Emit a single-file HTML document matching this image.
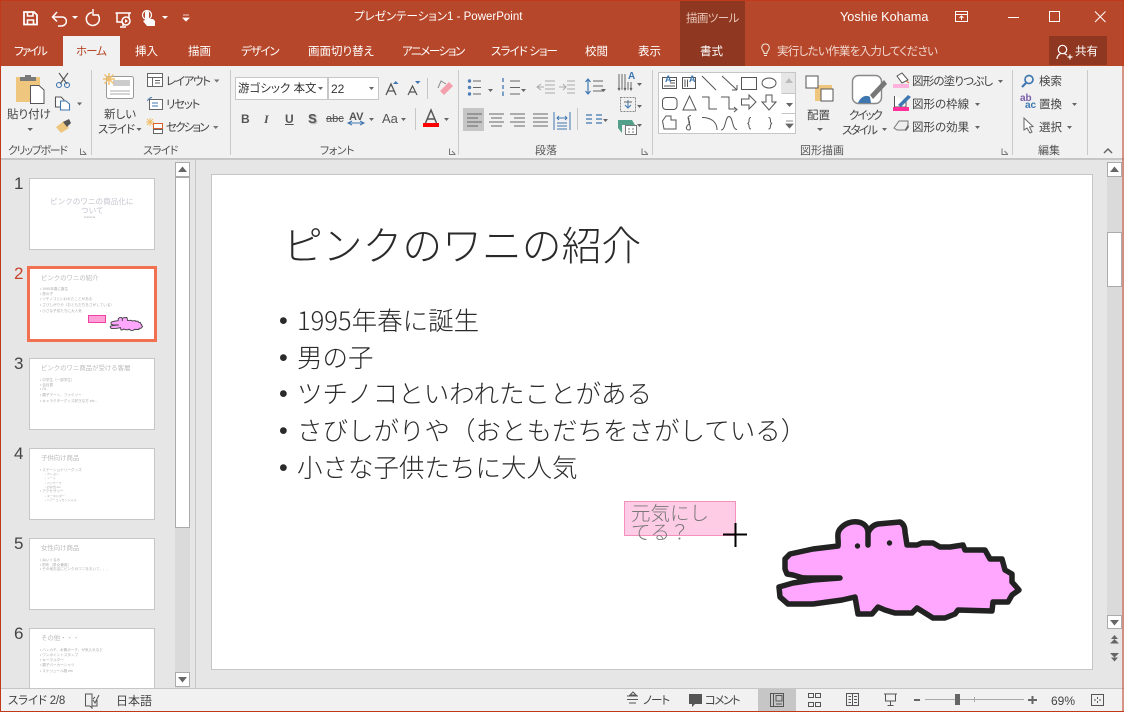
<!DOCTYPE html>
<html lang="ja"><head><meta charset="utf-8"><title>PowerPoint</title>
<style>
html,body{margin:0;padding:0;width:1124px;height:712px;overflow:hidden;background:#E6E6E6}
body{position:relative;font-family:"Liberation Sans","Noto Sans CJK JP",sans-serif;font-feature-settings:"palt";color:#444}
.b{position:absolute}
.t{position:absolute;white-space:nowrap;font-size:11.5px;line-height:16px;color:#444}
.w{color:#fff}
.g{color:#555}
.th{position:absolute;background:#fff;border:1px solid #c6c6c6;box-sizing:border-box}
.n{position:absolute;left:14px;font-size:17px;line-height:20px;color:#444;font-feature-settings:normal}
.x{position:absolute;white-space:nowrap;color:#aaa;line-height:6px;font-size:3.6px;font-feature-settings:normal}
.h{position:absolute;white-space:nowrap;color:#bbb;line-height:8px;font-size:6.4px;font-feature-settings:normal}
.s{position:absolute;white-space:nowrap;font-family:"Noto Sans CJK JP",sans-serif;font-size:25.5px;line-height:36px;left:297px;color:#2a2a2a;font-weight:300;font-feature-settings:normal}
svg{position:absolute;left:0;top:0}
</style></head><body>
<!-- chrome backgrounds -->
<div class="b" style="left:0;top:0;width:1124px;height:66px;background:#B7472A"></div>
<div class="b" style="left:680px;top:1px;width:65px;height:65px;background:#8F3720"></div>
<div class="b" style="left:63px;top:36px;width:57px;height:30px;background:#F1F1F1"></div>
<div class="b" style="left:1049px;top:36px;width:58px;height:29px;background:#8F3720"></div>
<div class="b" style="left:0;top:66px;width:1124px;height:92px;background:#F1F1F1"></div>
<div class="b" style="left:0;top:158px;width:1124px;height:2px;background:#C6C6C6"></div>
<div class="b" style="left:195px;top:160px;width:1px;height:528px;background:#C6C6C6"></div>
<div class="b" style="left:0;top:688px;width:1124px;height:1px;background:#C6C6C6"></div>
<div class="b" style="left:0;top:689px;width:1124px;height:22px;background:#F1F1F1"></div>
<div class="b" style="left:758px;top:689px;width:38px;height:22px;background:#C6C6C6"></div>
<!-- ribbon selected + boxes -->
<div class="b" style="left:463px;top:108px;width:21px;height:23px;background:#C6C6C6"></div>
<div class="b" style="left:235px;top:77px;width:93px;height:23px;background:#fff;border:1px solid #c6c6c6;box-sizing:border-box"></div>
<div class="b" style="left:328px;top:77px;width:51px;height:23px;background:#fff;border:1px solid #c6c6c6;box-sizing:border-box"></div>
<div class="b" style="left:658px;top:72px;width:138px;height:62px;background:#fff;border:1px solid #c6c6c6;box-sizing:border-box"></div>
<div class="b" style="left:781px;top:73px;width:14px;height:20px;background:#E6E6E6"></div>
<!-- scrollbars -->
<div class="b" style="left:175px;top:162px;width:15px;height:526px;background:#DADADA"></div>
<div class="b" style="left:175px;top:162px;width:15px;height:15px;background:#fff;border:1px solid #ababab;box-sizing:border-box"></div>
<div class="b" style="left:175px;top:177px;width:15px;height:351px;background:#fff;border:1px solid #ababab;box-sizing:border-box"></div>
<div class="b" style="left:175px;top:672px;width:15px;height:15px;background:#fff;border:1px solid #ababab;box-sizing:border-box"></div>
<div class="b" style="left:1107px;top:162px;width:15px;height:466px;background:#DADADA"></div>
<div class="b" style="left:1107px;top:162px;width:15px;height:15px;background:#fff;border:1px solid #ababab;box-sizing:border-box"></div>
<div class="b" style="left:1107px;top:232px;width:15px;height:55px;background:#fff;border:1px solid #ababab;box-sizing:border-box"></div>
<div class="b" style="left:1107px;top:615px;width:15px;height:14px;background:#fff;border:1px solid #ababab;box-sizing:border-box"></div>
<!-- main slide -->
<div class="b" style="left:211px;top:174px;width:882px;height:496px;background:#fff;border:1px solid #c6c6c6;box-sizing:border-box"></div>
<!-- thumbnails -->
<div class="th" style="left:29px;top:178px;width:126px;height:72px"></div>
<div class="th" style="left:27px;top:266px;width:130px;height:76px;border:3px solid #F0704F"></div>
<div class="th" style="left:29px;top:358px;width:126px;height:72px"></div>
<div class="th" style="left:29px;top:448px;width:126px;height:72px"></div>
<div class="th" style="left:29px;top:538px;width:126px;height:72px"></div>
<div class="th" style="left:29px;top:628px;width:126px;height:60px;border-bottom:0"></div>
<div class="n" style="top:174px">1</div><div class="n" style="top:264px;color:#C8452A">2</div><div class="n" style="top:354px">3</div><div class="n" style="top:444px">4</div><div class="n" style="top:534px">5</div><div class="n" style="top:624px">6</div>
<div class="h" style="left:50px;top:198px;font-size:7.6px;color:#c4c4cf">ピンクのワニの商品化に</div>
<div class="h" style="left:81px;top:207px;font-size:7.6px;color:#c4c4cf">ついて</div>
<div class="x" style="left:84px;top:214px;font-size:3px">Kohama</div>
<div class="h" style="left:41px;top:275px">ピンクのワニの紹介</div>
<div class="x" style="left:40px;top:286px">• 1995年春に誕生</div><div class="x" style="left:40px;top:291px">• 男の子</div><div class="x" style="left:40px;top:296px">• ツチノコといわれたことがある</div><div class="x" style="left:40px;top:302px">• さびしがりや（おともだちをさがしている）</div><div class="x" style="left:40px;top:308px">• 小さな子供たちに大人気</div>
<div class="h" style="left:41px;top:365px">ピンクのワニ商品が受ける客層</div>
<div class="x" style="left:40px;top:377px">• 中学生（一部学生）</div><div class="x" style="left:40px;top:382px">• 会社員</div><div class="x" style="left:40px;top:386px">• OL</div><div class="x" style="left:40px;top:392px">• 親子デート、ファミリー</div><div class="x" style="left:40px;top:398px">• キャラクターグッズ好きな方 etc…</div>
<div class="h" style="left:41px;top:455px">子供向け商品</div>
<div class="x" style="left:40px;top:467px">• ステーショナリーグッズ</div><div class="x" style="left:45px;top:471px;font-size:3px">› クレヨン</div><div class="x" style="left:45px;top:475px;font-size:3px">› ノート</div><div class="x" style="left:45px;top:480px;font-size:3px">› ペンケース</div><div class="x" style="left:45px;top:484px;font-size:3px">› お弁当 etc</div><div class="x" style="left:40px;top:488px">• アクセサリー</div><div class="x" style="left:45px;top:493px;font-size:3px">› キーホルダー</div><div class="x" style="left:45px;top:497px;font-size:3px">› ヘアーエッセンシャル</div>
<div class="h" style="left:41px;top:545px">女性向け商品</div>
<div class="x" style="left:40px;top:557px">• ぬいぐるみ</div><div class="x" style="left:40px;top:562px">• 財布（男女兼用）</div><div class="x" style="left:40px;top:566px">• その他お店にピンクのワニをおいて、、、</div>
<div class="h" style="left:41px;top:635px">その他・・・</div>
<div class="x" style="left:40px;top:647px">• ハンカチ、水筒ポーチ、が気入れなど</div><div class="x" style="left:40px;top:652px">• ワンポイントスタンプ</div><div class="x" style="left:40px;top:657px">• キーホルダー</div><div class="x" style="left:40px;top:662px">• 親子パーカーシャツ</div><div class="x" style="left:40px;top:668px">• スケジュール帳 etc</div>
<div class="b" style="left:88px;top:315px;width:18px;height:8px;background:#FF9FD8;border:1px solid #F040A0;box-sizing:border-box"></div>

<!-- slide content -->
<div class="t" style="left:283px;top:220px;font-family:'Noto Sans CJK JP',sans-serif;font-size:39.8px;line-height:48px;color:#2a2a2a;font-weight:300;font-feature-settings:normal">ピンクのワニの紹介</div>
<div class="t" style="left:279px;top:303px;font-size:25px;line-height:36px;color:#2a2a2a">•</div>
<div class="t" style="left:279px;top:340px;font-size:25px;line-height:36px;color:#2a2a2a">•</div>
<div class="t" style="left:279px;top:376px;font-size:25px;line-height:36px;color:#2a2a2a">•</div>
<div class="t" style="left:279px;top:413px;font-size:25px;line-height:36px;color:#2a2a2a">•</div>
<div class="t" style="left:279px;top:450px;font-size:25px;line-height:36px;color:#2a2a2a">•</div>
<div class="s" style="top:302px">1995年春に誕生</div>
<div class="s" style="top:339px">男の子</div>
<div class="s" style="top:375px">ツチノコといわれたことがある</div>
<div class="s" style="top:412px">さびしがりや（おともだちをさがしている）</div>
<div class="s" style="top:449px">小さな子供たちに大人気</div>
<div class="b" style="left:624px;top:501px;width:112px;height:35px;background:#FFCCE6;border:1px solid #F490BC;box-sizing:border-box"></div>
<div class="t" style="left:631px;top:502px;font-family:'Noto Sans CJK JP',sans-serif;font-size:19.5px;line-height:19px;color:#777;font-weight:300;font-feature-settings:normal;white-space:normal;width:85px">元気にし<br>てる？</div>

<!-- icons and shapes -->
<svg width="1124" height="712" viewBox="0 0 1124 712" fill="none">
<defs>
<path id="croc" d="M785 569L785 559L790 554L813 549L838 546C839 540 836 534 840 529C845 523 852 521 858 522C864 523 868 527 868 533L868 545L868 533C870 528 873 525 878 524L900 522C904 524 905 528 905 532L907 545L917 545L922 543L933 543L940 547L950 547L963 545L965 550L985 550L990 559L1002 559L1005 570L1012 574L1012 582L1019 590L1012 595L1008 602L993 602L992 611L958 610L955 614L945 618L933 618L917 608L912 613L895 613L885 610L878 607L872 614L858 614L855 597L842 600L813 604L788 604L780 597L779 587L793 583L813 580L840 578L803 578L793 575L787 574Z"/>
</defs>
<!-- window edges -->
<path d="M.5 0V712M1123 0V712M0 711.5H1124" stroke="#C0391B"/>
<path d="M0 .5H1124" stroke="#C0391B"/>
<!-- croc main -->
<use href="#croc" fill="#FFA6FF" stroke="#222" stroke-width="5.500" stroke-linejoin="round"/>
<path d="M840 578L803 576L793 583Z" fill="#222" stroke="#222" stroke-width="1.500"/>
<circle cx="857.500" cy="546" r="2.700" fill="#222"/>
<circle cx="889.500" cy="543" r="2.700" fill="#222"/>
<!-- croc thumb -->
<g transform="translate(5.100 247) scale(.135)"><use href="#croc" fill="#FFA6FF" stroke="#444" stroke-width="7" stroke-linejoin="round"/></g>
<!-- cursor -->
<path d="M723 534.500H747M735.500 523V547" stroke="#000" stroke-width="2"/>
<!-- QAT -->
<g stroke="#fff" stroke-width="1.500" fill="none">
<path d="M24 12H34L37 15V24.500H24Z" stroke-width="1.800"/><path d="M27.500 12V16H33V12M27.500 24.500V20H33.500V24.500" stroke-width="1.600"/>
<path d="M53 17H62C68 17 68 26 61 26H58"/><path d="M57 12L52.500 17L57 21.500"/>
<path d="M92 12.500A6.500 6.500 0 1 0 98 15"/><path d="M93 9V15H99" stroke-width="1.400"/>
<path d="M115.500 13H131M117 13V22H129V13M123 22V26M120 27H126"/><circle cx="126" cy="21" r="4" fill="#B7472A"/><path d="M125 19L128 21L125 23Z" fill="#fff" stroke="none"/>
<circle cx="147" cy="15" r="4.500" stroke-width="1.200"/>
<path d="M145 13A2 2 0 0 1 149 13V19H153L155 21V26H147L143 21L145 20Z" fill="#fff" stroke="none"/>
</g>
<path d="M72 16H78L75 19ZM162 16H168L165 19Z" fill="#fff"/>
<path d="M183 15H189M183 18H189L186 21Z" stroke="#fff" fill="#fff" stroke-width=".8"/>
<!-- window controls -->
<g stroke="#fff" fill="none">
<rect x="955.500" y="11.500" width="12" height="10"/><path d="M955.500 14.500H967.500M961.500 20V16M959.500 18L961.500 16L963.500 18"/>
<path d="M1008 17.500H1019"/><rect x="1049.500" y="11.500" width="10" height="10"/>
<path d="M1095 11.500L1105.500 22M1105.500 11.500L1095 22"/>
<circle cx="1062.500" cy="49.500" r="4.200" stroke-width="1.200"/>
<path d="M1057 59C1057 56 1059 54.500 1060.500 53.500M1064.500 53.500L1067 55M1067.500 57H1072.500M1070 54.500V59.500" stroke-width="1.200"/>
<path d="M764 53.500V52C760 48 762 44 765.500 44C769 44 771 48 767 52V53.500ZM764 55.500H767" stroke="#eed"/>
</g>
<!-- clipboard -->
<path d="M16 77H40V102H16Z" fill="#EFC67E"/><path d="M20 81V77H25V75H31V77H36V81Z" fill="#7a7a7a"/>
<path d="M30.500 85.500H39L44 90V103.500H30.500Z" fill="#fff" stroke="#555"/>
<g stroke="#555" fill="none" stroke-width="1.100"><path d="M59 73L67 84M68 73L60 84"/><circle cx="59" cy="85" r="2.500" stroke="#3F77B0"/><circle cx="67" cy="85" r="2.500" stroke="#3F77B0"/>
<path d="M55.500 97H61L64 100V107H55.500Z" fill="#fff"/><path d="M60.500 101H66L69.500 104V110H60.500Z" fill="#fff" stroke="#3F77B0"/>
</g>
<path d="M77 102.500H82L79.500 105.500Z" fill="#666"/>
<path d="M56 127L64 121L69 128L61 133Z" fill="#EFC67E"/><path d="M63 122L69 119L71 123L67 127Z" fill="#555"/>
<path d="M27.500 128H33L30 131Z" fill="#666"/>
<!-- new slide -->
<g stroke="#999" fill="#fff"><rect x="106.500" y="76.500" width="27" height="22" rx="2"/></g>
<rect x="113" y="80" width="17" height="6" fill="#ccc"/><path d="M110 91H130M110 94H130" stroke="#aaa"/>
<path d="M109 73V85M103 79H115M104.500 74.500L113.500 83.500M113.500 74.500L104.500 83.500" stroke="#EFBE6B" stroke-width="1.400"/>
<path d="M136.500 128H141.500L139 131Z" fill="#666"/>
<g stroke="#666" fill="#fff"><rect x="147.500" y="73.500" width="15" height="13"/><path d="M147.500 77.500H162.500M152.500 77.500V86.500M155 80.500H160M155 83H160" fill="none"/>
<rect x="149.500" y="99.500" width="13" height="10" stroke="#666"/><path d="M152 97.500C150 97.500 148 99 147.500 101M152 103H158M152 106H158" fill="none" stroke="#3F77B0"/>
<rect x="153.500" y="123.500" width="9" height="5" stroke="#D9602C"/><rect x="153.500" y="129.500" width="9" height="4"/></g>
<path d="M150 118V126M146 122H154M147 119L153 125M153 119L147 125" stroke="#EFBE6B"/>
<path d="M214 79.500H219.500L216.750 82.500ZM213 126H218.500L215.750 129Z" fill="#777"/>
<path d="M318 87H323L320.500 90ZM369 87H374L371.500 90Z" fill="#666"/>
<!-- font buttons -->
<path d="M386 95L391 84L396 95M388 91H394" stroke="#555" stroke-width="1.300"/><path d="M393 84H398.500L395.750 81Z" fill="#3F77B0"/>
<path d="M408 95L412.500 86L417 95M409.500 92H415.500" stroke="#555" stroke-width="1.200"/><path d="M415 81H420.500L417.750 84Z" fill="#3F77B0"/>
<path d="M427.500 78V99" stroke="#c6c6c6"/>
<path d="M440 91L449 82L453 86L444 95Z" fill="#F3A0AC"/><path d="M438 88L441 81L446 84" stroke="#888" stroke-width="1"/>
<path d="M415.500 108V130" stroke="#c6c6c6"/>
<path d="M369 118H374L371.500 121ZM401 118H406L403.500 121ZM444 118H449L446.500 121Z" fill="#666"/>
<path d="M425.500 123L431 110L436.500 123M427.500 119H434.500" stroke="#555" stroke-width="1.500"/><rect x="423" y="123" width="16" height="4" fill="#F00"/>
<path d="M349 123H363M352 121L348 123L352 125M360 121L364 123L360 125" stroke="#3F77B0" stroke-width="1"/>
<!-- paragraph -->
<g fill="#4D7EB5"><circle cx="469.500" cy="81" r="1.700"/><circle cx="469.500" cy="87.500" r="1.700"/><circle cx="469.500" cy="94" r="1.700"/></g>
<path d="M473 81H481M473 87.500H481M473 94H481M510 81H520M510 87.500H520M510 94H520" stroke="#666"/>
<path d="M488 89H493L490.500 92ZM521 89H526L523.500 92ZM601 89H606L603.500 92ZM637 83H642L639.500 86ZM637 105H642L639.500 108ZM603 119H608L605.500 122ZM637 124H642L639.500 127Z" fill="#666"/>
<path d="M503 78V82M503 85V89M503 91.500V96" stroke="#4D7EB5" stroke-width="1.400"/>
<path d="M545 81H555M545 85H555M545 89H555M545 93H555M567 81H575M567 85H575M567 89H575M567 93H575" stroke="#aaa"/>
<path d="M537 87H544M541 84L537 87L541 90M559 87H566M563 84L566 87L563 90" stroke="#aaa"/>
<path d="M588 79V94M585.500 82L588 79L590.500 82M585.500 91L588 94L590.500 91" stroke="#3F77B0" stroke-width="1.200"/><path d="M593 81H603M593 86H603M593 91H603" stroke="#666"/>
<path d="M619 74V90M622 74V90M625 74V90M628 82V90M631 82V90" stroke="#666"/><path d="M618 88L619 90L620 88M624 88L625 90L626 88M630 88L631 90L632 88" stroke="#666"/>
<rect x="620.500" y="97.500" width="15" height="14" stroke="#888" stroke-dasharray="2 1"/><path d="M628 100V108M625 105L628 108L631 105" stroke="#3F77B0"/><path d="M624 102H632" stroke="#666"/>
<path d="M467 114H482M467 118H478M467 122H482M467 126H478" stroke="#666"/>
<path d="M489 114H504M491 118H502M489 122H504M491 126H502M510 114H525M514 118H525M510 122H525M514 126H525M533 114H548M533 118H548M533 122H548M533 126H548" stroke="#666"/>
<path d="M554 112V130M570 112V130M557 118H567M559 116L557 118L559 120M565 116L567 118L565 120M557 123H567M557 126H567M557 129H567" stroke="#3F77B0"/>
<path d="M577.500 108V130" stroke="#c6c6c6"/>
<path d="M586 115H592M586 119H592M586 123H592M596 115H602M596 119H602M596 123H602" stroke="#3F77B0" stroke-width="1.300"/>
<path d="M618 120H632L635 125H622L622 133L618 128Z" fill="#53A08A"/><rect x="625.500" y="125.500" width="11" height="9" fill="#fff" stroke="#777"/><path d="M628 129H630M628 132H630M632 129H634M632 132H634" stroke="#777"/>
<!-- shapes gallery -->
<g stroke="#555" fill="none">
<rect x="662.500" y="77.500" width="14" height="11"/><rect x="682.500" y="77.500" width="13" height="11"/>
<path d="M664 86H675M670 80.500H675M670 83H675M685 79.500V87M687.500 79.500V87"/>
<path d="M702 76L716 90M722 76L737 90M737 90V85M737 90H732"/>
<rect x="741.500" y="77.500" width="15" height="12"/><ellipse cx="769" cy="83" rx="7" ry="5"/>
<rect x="662.500" y="97.500" width="14.500" height="12" rx="3.500"/><path d="M683 110L689.500 96L696 110Z"/>
<path d="M702 97H709V109H717M721 97H729V109H736M734 107L737 109.500L734 112"/>
<path d="M741.500 99H749V95L756 102L749 109V105H741.500Z"/><path d="M766 95H772V102H776L769 110L762 102H766Z"/>
<path d="M662.500 121L666 116H671V120H676V129H664Z"/>
<path d="M691 115.500C684 117 692 122 689 124C685 127 686 130 689 130C693 129 687 122 689 118"/>
<path d="M702 117.500C710 117.500 717 121 717 130M721 130C726 130 725 116.500 729 116.500C733 116.500 732 129.500 737 129.500"/>
<path d="M751 117.500C747.500 117.500 750.500 123 747.500 123.500C750.500 124 747.500 129 751 129M768.500 117.500C772 117.500 769 123 772 123.500C769 124 772 129 768.500 129"/>
</g>
<path d="M785 83H793L789 78Z" fill="#bbb"/>
<path d="M781.500 93.500H795M781.500 113.500H795" stroke="#c6c6c6"/>
<path d="M786 103H793L789.500 107Z" fill="#666"/><path d="M786 121H793M786 124H793L789.500 128Z" stroke="#666" fill="#666" stroke-width=".8"/>
<!-- arrange -->
<rect x="815" y="85" width="17" height="16" fill="#EFC67E"/><rect x="806" y="76" width="12" height="12" fill="#fff" stroke="#555"/><rect x="821" y="89" width="12" height="12" fill="#fff" stroke="#555"/>
<path d="M817 128H823L820 131Z" fill="#666"/>
<!-- quick style -->
<rect x="852.500" y="75.500" width="29" height="28" rx="6" fill="#fff" stroke="#888" stroke-width="1.400"/>
<path d="M858 103C860 97 866 94 870 97L871 103Z" fill="#3F77B0"/><path d="M870 95L884 80L887 84L873 99Z" fill="#777"/>
<path d="M882 128H887L884.500 131Z" fill="#666"/>
<!-- shape fill etc -->
<path d="M897 76L902 73L908 80L902 83Z" fill="#fff" stroke="#555"/><path d="M906 81L909 83" stroke="#D9602C"/>
<rect x="893" y="84" width="16" height="4" fill="#FFB3DC"/>
<path d="M894.500 96V107H906V101" stroke="#555" fill="#fff"/><path d="M898 105L908 95L911 97L901 107Z" fill="#3F77B0"/><rect x="893" y="107" width="16" height="4" fill="#FF2F9B"/>
<path d="M894 128L899 121H908V126L905 130H897Z" fill="#eee" stroke="#777"/><path d="M905 130L908 124L909 127L906 131Z" fill="#666"/>
<path d="M998 80H1003L1000.500 83ZM975 103H980L977.500 106ZM975 126H980L977.500 129ZM1072 103H1077L1074.500 106ZM1067 126H1072L1069.500 129Z" fill="#666"/>
<!-- editing -->
<circle cx="1029" cy="79.500" r="4" stroke="#3F77B0" stroke-width="1.700"/><path d="M1026 83L1022 87" stroke="#3F77B0" stroke-width="2.200"/>
<path d="M1024 118V130L1027 128L1030 133L1032 132L1029.500 127L1033 126.500Z" stroke="#666" fill="#fff"/>
<path d="M1104 153L1108 149L1112 153" stroke="#666" stroke-width="1.500"/>
<!-- separators -->
<path d="M91.500 70V155M230.500 70V155M458.500 70V155M652.500 70V155M1012.500 70V155M1087.500 70V155" stroke="#c9c9c9"/>
<g stroke="#777" fill="none"><path d="M80.500 148.500V154.500H86.500M83 151L86 154M449.500 148.500V154.500H455.500M452 151L455 154M642 148.500V154.500H648M644.500 151L647.500 154M1002 148.500V154.500H1008M1004.500 151L1007.500 154"/></g>
<!-- scroll arrows -->
<path d="M178 172H187L182.500 166.500ZM1110 172H1119L1114.500 166.500Z" fill="#666"/>
<path d="M178 677H187L182.500 682.500ZM1110 620H1119L1114.500 625.500Z" fill="#666"/>
<path d="M1111 639H1118L1114.500 635ZM1110 643.500H1119L1114.500 639Z" fill="#666"/>
<path d="M1110 653H1119L1114.500 657.500ZM1111 657.500H1118L1114.500 661.500Z" fill="#666"/>
<!-- status icons -->
<g stroke="#555" fill="none">
<path d="M92 694H85.500V706H90L92 708ZM92 694V708M92 706H97V700M95 697L93 699M93 700L95 703L99 695"/>
<path d="M627 696H638M627 699.500H638M629 703H636M627 703M633 692L636 695H630Z"/>
<rect x="770.500" y="693.500" width="13" height="13"/><path d="M773.500 693.500V706.500M776 695.500H782V701H776ZM776 704H782"/>
<rect x="808.500" y="693.500" width="5" height="4"/><rect x="815.500" y="693.500" width="5" height="4"/><rect x="808.500" y="702.500" width="5" height="4"/><rect x="815.500" y="702.500" width="5" height="4"/>
<path d="M846.500 693.500H858.500V705.500H846.500ZM852.500 693.500V705.500M848.500 696.500H851M848.500 699.500H851M848.500 702.500H851M854 696.500H857M854 699.500H857M854 702.500H857"/>
<path d="M884 694H897M885.500 694V701H895.500V694M890.500 701V705M887.500 705.500H893.500"/>
<rect x="1091.500" y="694.500" width="12" height="11"/><path d="M1097.500 697V699M1097.500 701V703M1094 700H1096M1099 700H1101"/>
</g>
<path d="M689 694H702V704H695L692 707V704H689Z" fill="#555"/>
<path d="M914 700H920M1028 700H1037M1032.500 696V704" stroke="#666" stroke-width="2"/>
<path d="M925 699.500H1024" stroke="#aaa"/><path d="M974.500 697V702" stroke="#aaa"/><rect x="955" y="694" width="5" height="11" fill="#666"/>
</svg>

<!-- title bar text -->
<div class="t w" style="left:354px;top:9px;font-size:11.5px">プレゼンテーション1 - PowerPoint</div>
<div class="t" style="left:686px;top:11px;font-size:11.5px;letter-spacing:-.6px;color:#E8C5B8">描画ツール</div>
<div class="t w" style="left:840px;top:9px;font-size:12.7px">Yoshie Kohama</div>
<!-- tabs -->
<div class="t w" style="left:14px;top:44px;letter-spacing:-2px">ファイル</div>
<div class="t" style="left:76px;top:44px;letter-spacing:-1px;color:#B7472A">ホーム</div>
<div class="t w" style="left:135px;top:44px">挿入</div>
<div class="t w" style="left:188px;top:44px">描画</div>
<div class="t w" style="left:241px;top:44px;letter-spacing:-1.200px">デザイン</div>
<div class="t w" style="left:308px;top:44px">画面切り替え</div>
<div class="t w" style="left:402px;top:44px;letter-spacing:-1.400px">アニメーション</div>
<div class="t w" style="left:491px;top:44px;letter-spacing:-.9px">スライド ショー</div>
<div class="t w" style="left:585px;top:44px">校閲</div>
<div class="t w" style="left:638px;top:44px">表示</div>
<div class="t w" style="left:700px;top:44px">書式</div>
<div class="t" style="left:777px;top:44px;letter-spacing:-.7px;color:#F0D8D0">実行したい作業を入力してください</div>
<div class="t w" style="left:1075px;top:44px">共有</div>
<!-- ribbon text -->
<div class="t" style="left:7px;top:107px">貼り付け</div>
<div class="t" style="left:104px;top:107px">新しい</div>
<div class="t" style="left:98px;top:122px;letter-spacing:-.8px">スライド</div>
<div class="t" style="left:166px;top:74px;letter-spacing:-1.300px">レイアウト</div>
<div class="t" style="left:166px;top:97px;letter-spacing:-1.300px">リセット</div>
<div class="t" style="left:166px;top:120px;letter-spacing:-1.800px">セクション</div>
<div class="t" style="left:238px;top:81px;font-size:11.5px;color:#333">游ゴシック 本文</div>
<div class="t" style="left:331px;top:81px;font-size:12px;color:#333">22</div>
<div class="t" style="left:241px;top:111px;font-weight:bold;font-size:12px;color:#555">B</div>
<div class="t" style="left:264px;top:111px;font-style:italic;font-weight:bold;font-size:12px;color:#555;font-family:'Liberation Serif',serif">I</div>
<div class="t" style="left:285px;top:111px;font-weight:bold;font-size:12px;color:#555;text-decoration:underline">U</div>
<div class="t" style="left:308px;top:111px;font-weight:bold;font-size:13px;color:#555;text-shadow:1px 1px 1px #aaa">S</div>
<div class="t" style="left:326px;top:111px;font-size:11px;color:#555;text-decoration:line-through">abc</div>
<div class="t" style="left:349px;top:109px;font-size:11px;font-weight:bold;color:#555">AV</div>
<div class="t" style="left:382px;top:111px;font-size:13px;color:#555">Aa</div>
<div class="t" style="left:1039px;top:74px">検索</div>
<div class="t" style="left:1039px;top:97px">置換</div>
<div class="t" style="left:1039px;top:120px">選択</div>
<div class="t" style="left:1020px;top:94px;font-size:10px;line-height:10px;font-weight:bold;color:#7A5EA8;font-feature-settings:normal">ab</div>
<div class="t" style="left:1025px;top:101px;font-size:10px;line-height:10px;font-weight:bold;color:#3F77B0;font-feature-settings:normal">ac</div>
<div class="t" style="left:912px;top:74px;letter-spacing:-.8px">図形の塗りつぶし</div>
<div class="t" style="left:912px;top:97px">図形の枠線</div>
<div class="t" style="left:912px;top:120px">図形の効果</div>
<div class="t" style="left:807px;top:108px">配置</div>
<div class="t" style="left:849px;top:108px;letter-spacing:-2px">クイック</div>
<div class="t" style="left:842px;top:123px;letter-spacing:-1.800px">スタイル</div>
<div class="t" style="left:665px;top:74px;font-size:9px;line-height:10px;font-weight:bold;color:#3F77B0;font-feature-settings:normal">A</div>
<div class="t" style="left:689px;top:74px;font-size:9px;line-height:10px;font-weight:bold;color:#3F77B0;font-feature-settings:normal">A</div>
<div class="t" style="left:628px;top:72px;font-size:10px;line-height:10px;font-weight:bold;color:#3F77B0;font-feature-settings:normal">A</div>
<!-- group labels -->
<div class="t g" style="left:8px;top:143px;font-size:11px;letter-spacing:-1.300px">クリップボード</div>
<div class="t g" style="left:143px;top:143px;font-size:11px;letter-spacing:-.8px">スライド</div>
<div class="t g" style="left:320px;top:143px;font-size:11px;letter-spacing:-.5px">フォント</div>
<div class="t g" style="left:535px;top:143px;font-size:11px">段落</div>
<div class="t g" style="left:800px;top:143px;font-size:11px">図形描画</div>
<div class="t g" style="left:1038px;top:143px;font-size:11px">編集</div>
<!-- status bar -->
<div class="t" style="left:8px;top:693px;letter-spacing:-.2px">スライド 2/8</div>
<div class="t" style="left:116px;top:693px;font-size:12px">日本語</div>
<div class="t" style="left:643px;top:693px;letter-spacing:-1px">ノート</div>
<div class="t" style="left:705px;top:693px;letter-spacing:-1.500px">コメント</div>
<div class="t" style="left:1051px;top:693px;font-size:12px">69%</div>
</body></html>
